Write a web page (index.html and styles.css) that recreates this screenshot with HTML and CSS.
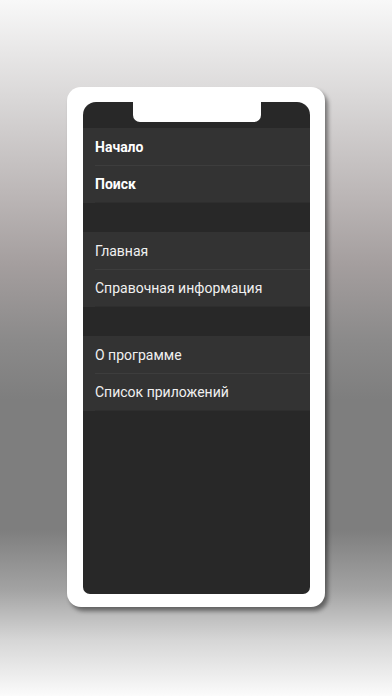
FILE: index.html
```html
<!DOCTYPE html>
<html lang="ru">
<head>
    <meta charset="UTF-8">
    <meta name="viewport" content="width=device-width, initial-scale=1.0">
    <title>Меню</title>
    <link rel="stylesheet" href="styles.css">
</head>
<body>
    <div class="phone">
        <div class="screen">
            <div class="top">
                <div class="notch"></div>
            </div>

            <ul class="group">
                <li class="row bold"><span>Начало</span></li>
                <li class="row bold"><span>Поиск</span></li>
            </ul>

            <ul class="group">
                <li class="row"><span>Главная</span></li>
                <li class="row"><span>Справочная информация</span></li>
            </ul>

            <ul class="group">
                <li class="row"><span>О программе</span></li>
                <li class="row"><span>Список приложений</span></li>
            </ul>
        </div>
    </div>
</body>
</html>
```

FILE: styles.css
```css
/* Page background */
body {
  margin: 0;
  height: 696px;
  font-family: Roboto, "Noto Sans", sans-serif;
  display: flex;
  justify-content: center;
  padding-top: 87px;
  box-sizing: border-box;
  background: linear-gradient(to bottom,
    #f8f8f8 0px,
    #d9d7d7 100px,
    #bdb8b8 190px,
    #a49e9e 265px,
    #8b8a8a 340px,
    #7e7e7e 400px,
    #7e7e7e 530px,
    #a3a3a3 590px,
    #d6d6d6 640px,
    #fbfbfb 696px);
}

/* White phone frame */
.phone {
  width: 258px;
  height: 520px;
  box-sizing: border-box;
  padding: 15px 15px 13px 16px;
  background-color: #fff;
  border-radius: 14px;
  box-shadow: 3px 4px 4px rgba(0, 0, 0, 0.45);
}

.screen {
  height: 100%;
  background-color: #282828;
  border-radius: 13px 13px 7px 7px;
  overflow: hidden;
}

.top {
  height: 26px;
}

.notch {
  width: 128px;
  height: 20px;
  margin: 0 auto;
  background-color: #fff;
  border-radius: 0 0 7px 7px;
}

/* Menu groups */
.group {
  list-style-type: none;
  margin: 0 0 29px 0;
  padding: 0;
  background-color: #333;
}

.row {
  padding-left: 12px;
  color: #f0f0f0;
  font-size: 14px;
}

.row span {
  display: flex;
  align-items: center;
  height: 37px;
  border-bottom: 1px solid #3d3d3d;
}

.row:last-child span {
  height: 36px;
  border-bottom: 1px solid #2e2e2e;
}

.bold {
  color: #fff;
  font-weight: bold;
}
```
